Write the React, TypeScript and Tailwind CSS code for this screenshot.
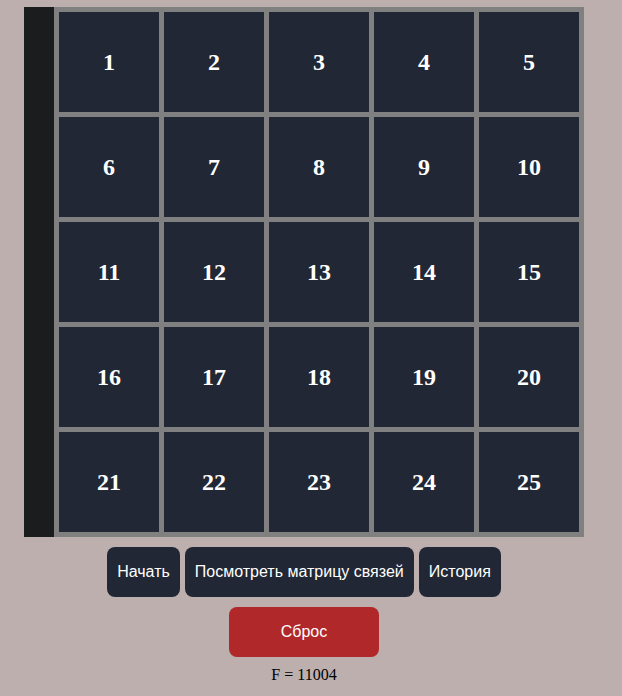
export default function App() {
  const cells = Array.from({ length: 25 }, (_, i) => i + 1);

  return (
    <div className="min-h-[696px] w-full bg-[#bcafad] font-['Liberation_Serif',serif]">
      <div className="flex w-[608px] flex-col items-center pt-[7px]">
        {/* Board */}
        <div className="flex">
          <div className="w-[30px] bg-[#1b1c1e]"></div>
          <div className="grid grid-cols-5 gap-[5px] bg-[#808080] p-[5px]">
            {cells.map((n) => (
              <div
                key={n}
                className="flex h-[100px] w-[100px] items-center justify-center bg-[#212734] text-[24px] font-bold text-white"
              >
                {n}
              </div>
            ))}
          </div>
        </div>

        {/* Controls */}
        <div className="mt-[10px] flex gap-[5px] font-['Liberation_Sans',Arial,sans-serif] text-[16px] text-white">
          <button className="h-[50px] rounded-[8px] bg-[#212734] px-[10px]">
            Начать
          </button>
          <button className="h-[50px] rounded-[8px] bg-[#212734] px-[10px]">
            Посмотреть матрицу связей
          </button>
          <button className="h-[50px] rounded-[8px] bg-[#212734] px-[10px]">
            История
          </button>
        </div>

        <button className="mt-[10px] h-[50px] w-[150px] rounded-[8px] bg-[#b0282a] font-['Liberation_Sans',Arial,sans-serif] text-[16px] text-white">
          Сброс
        </button>

        <p className="mt-[6px] text-[16px] leading-6 text-black">F = 11004</p>
      </div>
    </div>
  );
}
